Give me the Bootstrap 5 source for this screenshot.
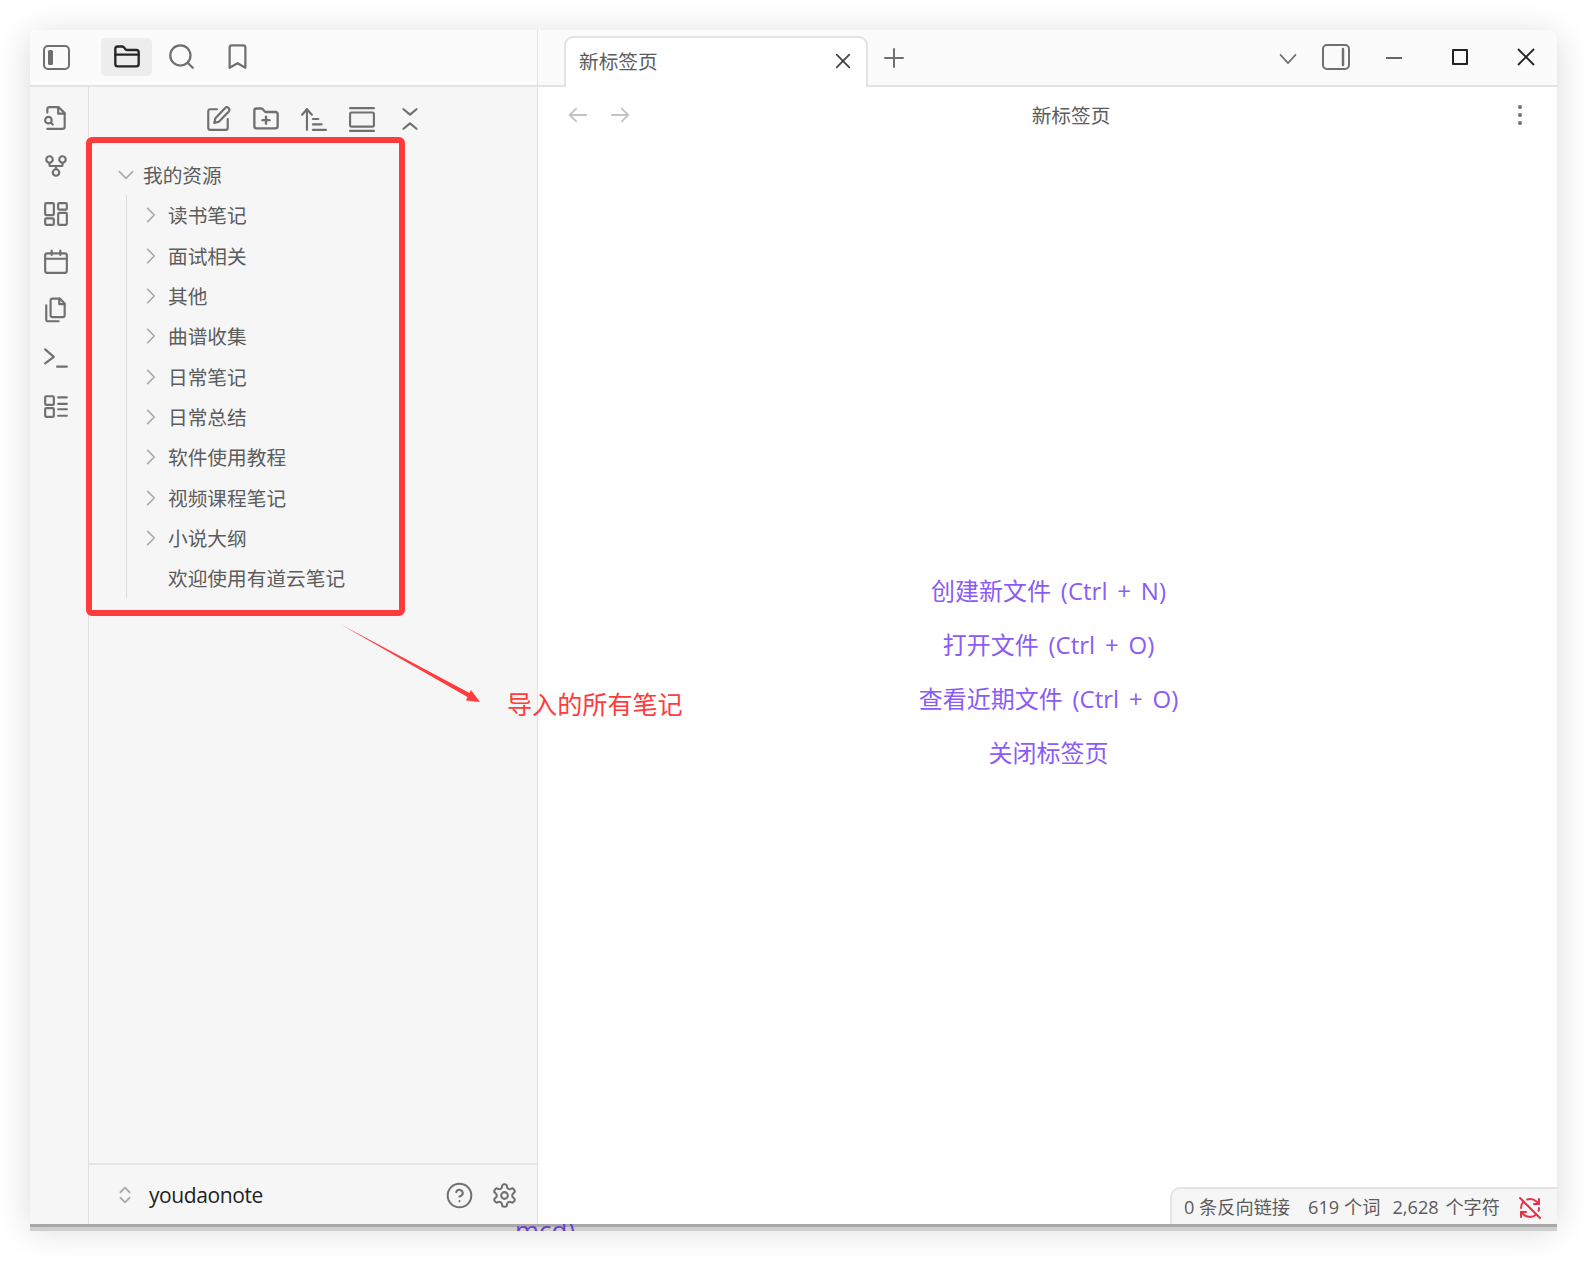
<!DOCTYPE html>
<html lang="zh-CN">
<head>
<meta charset="utf-8">
<title>新标签页</title>
<link rel="stylesheet" href="https://cdn.jsdelivr.net/npm/bootstrap@5.3.0/dist/css/bootstrap.min.css">
<style>
html,body{height:100%;margin:0;background:#fff}
body{font-family:"Noto Sans CJK SC","Open Sans",sans-serif;color:#5c5c5c;overflow:hidden}
.stage{position:relative;width:1587px;height:1261px;padding:30px 0 0 30px;background:#fff}
.appwin{position:relative;width:1527px;height:1195px;background:#fff;box-shadow:0 5px 34px rgba(0,0,0,.15);border-radius:0 8px 8px 6px;overflow:hidden;z-index:1}
.under-strip{position:absolute;left:30px;top:1224px;width:1527px;height:7px;background:linear-gradient(#a8a8a8 0,#a8a8a8 3px,#cfcfcf 3px,#cfcfcf 100%);overflow:hidden;z-index:2}
.under-strip span{position:absolute;left:485px;top:-9px;font:26px/30px "Open Sans",sans-serif;color:#6d42c9}
.left-col{width:508px;background:#f6f6f6;border-right:1px solid #e0e0e0}
.top-left{height:57px;background:#fbfbfb;border-bottom:2px solid #e3e3e3;padding:8px 0 0 0}
.top-slot{width:51px;height:38px;border-radius:5px;margin-right:5px}
.top-slot.on{background:#ededed;margin-right:4px}
.top-slot.nudge{height:36px}
.top-toggle{width:53px;margin-right:18px}
.ribbon{width:59px;border-right:1px solid #e0e0e0;padding-top:7px;padding-right:6px}
.rib-btn{height:48px;width:100%}
.ico{display:block;fill:none;stroke:#707070;stroke-width:2;stroke-linecap:round;stroke-linejoin:round}
.nav-tools{height:50px;padding-left:105.500px;padding-top:14px;gap:0}
.tool-btn{width:47.800px;height:36px}
.vault-tree{padding:0 0 0 25px;margin-top:17px;flex:1 1 auto}
.tree-row{height:40.350px;font-size:19.700px;line-height:40px;color:#5c5c5c;white-space:nowrap}
.tree-root{height:41px}
.tree-root .tw{width:29px}
.tw{width:29px;flex:none}
.tree-kids{border-left:1px solid #dcdcdc;margin-left:12px;width:300px;padding-left:0}
.tree-kids .tree-row{padding-left:16px}
.tree-kids .tw{width:25px}
.tree-kids .leaf{padding-left:41px}
.vault-foot{height:62px;border-top:2px solid #e6e6e6;padding:0 19px 0 25px}
.vault-name{font:21px/1 "Open Sans",sans-serif;color:#222;margin-left:13px;letter-spacing:-.4px}
.help-gap{margin-right:18px}
.right-col{min-width:0}
.tab-bar{height:57px;background:#fbfbfb;border-bottom:2px solid #e3e3e3;position:relative;padding-left:26px}
.tab-on{width:304px;height:51px;margin-top:6px;background:#fff;border:2px solid #e3e3e3;border-bottom:0;border-radius:9px 9px 0 0;padding:0 14px 4px 13px;font-size:19.700px;margin-bottom:-2px;position:relative;color:#5c5c5c}
.tab-plus{margin-left:14px;margin-top:16px}
.win-ctl{margin-left:auto;gap:0;padding-top:5px;padding-right:22px}
.wc{height:40px}
.chev-nudge{margin-top:4px}
.min-nudge{margin-top:2px}
.min-gap{margin-left:36px}
.max-gap{margin-left:50px}
.close-gap{margin-left:49px}
.view-bar{height:55px;padding:0 34px 0 29px;position:relative}
.view-name{font-size:19.700px;color:#5c5c5c;white-space:nowrap;margin-right:6px}
.empty-pane{flex:1 1 auto;padding-bottom:23px;padding-left:2px;gap:0}
.empty-link{font-family:"Open Sans","Noto Sans CJK SC",sans-serif;font-size:24px;line-height:54px;color:#8a5cf5;white-space:nowrap;text-decoration:none;word-spacing:3.600px}
.stat-bar{position:absolute;right:0;bottom:0;height:38px;width:387px;background:#f6f6f6;border:2px solid #e3e3e3;border-right:0;border-bottom:0;border-radius:10px 0 0 0;font-size:18.200px;color:#5c5c5c;padding:2px 0 0 12px;white-space:nowrap;font-family:"Open Sans","Noto Sans CJK SC",sans-serif}
.stat-two{margin-left:18px}
.stat-three{margin-left:12px;word-spacing:2px}
.stat-ico{stroke:#e93147;margin-left:18px}
.mark-box{position:absolute;left:56px;top:107px;width:319px;height:479px;border:6px solid #ff3b3b;border-radius:6px;pointer-events:none}
.mark-arrow{position:absolute;left:310px;top:594px;width:150px;height:84px}
.mark-text{position:absolute;left:477px;top:655px;font-size:25.100px;line-height:36px;color:#ff3b3b;white-space:nowrap}
</style>
</head>
<body>
<div class="stage">
<div class="under-strip"><span>mcd)</span></div>
<div class="appwin d-flex">
  <div class="left-col d-flex flex-column flex-shrink-0">
    <div class="top-left d-flex align-items-start flex-shrink-0">
      <div class="top-slot top-toggle d-flex justify-content-center align-items-center">
        <svg class="ico" width="27" height="25" viewBox="0 0 27 25"><rect x="1" y="1" width="25" height="23" rx="4"/><rect x="5" y="5" width="5" height="15" rx="1.5" fill="#707070" stroke="none"/></svg>
      </div>
      <div class="top-slot on d-flex justify-content-center align-items-center">
        <svg class="ico" style="stroke:#262626" width="28" height="28" viewBox="0 0 24 24"><path d="M20 20a2 2 0 0 0 2-2V8a2 2 0 0 0-2-2h-7.9a2 2 0 0 1-1.69-.9L9.6 3.9A2 2 0 0 0 7.93 3H4a2 2 0 0 0-2 2v13a2 2 0 0 0 2 2Z"/><path d="M2 10h20"/></svg>
      </div>
      <div class="top-slot nudge d-flex justify-content-center align-items-center">
        <svg class="ico" width="27" height="27" viewBox="0 0 24 24"><circle cx="11" cy="11" r="9"/><path d="m22 22-4.5-4.5"/></svg>
      </div>
      <div class="top-slot nudge d-flex justify-content-center align-items-center">
        <svg class="ico" width="27" height="27" viewBox="0 0 24 24"><path d="m19 22-7-4-7 4V4a2 2 0 0 1 2-2h10a2 2 0 0 1 2 2v18z"/></svg>
      </div>
    </div>
    <div class="d-flex flex-grow-1" style="min-height:0">
      <div class="ribbon d-flex flex-column align-items-center flex-shrink-0">
        <div class="rib-btn d-flex justify-content-center align-items-center"><svg class="ico" width="26" height="26" viewBox="0 0 24 24"><path d="M4 22h14a2 2 0 0 0 2-2V7.5L14.5 2H6a2 2 0 0 0-2 2v3"/><path d="M14 2v6h6"/><circle cx="5" cy="14" r="3"/><path d="m9 18-1.8-1.8"/></svg></div>
        <div class="rib-btn d-flex justify-content-center align-items-center"><svg class="ico" width="26" height="26" viewBox="0 0 24 24"><circle cx="12" cy="18" r="3"/><circle cx="6" cy="6" r="3"/><circle cx="18" cy="6" r="3"/><path d="M18 9v2c0 .6-.4 1-1 1H7c-.6 0-1-.4-1-1V9"/><path d="M12 12v3"/></svg></div>
        <div class="rib-btn d-flex justify-content-center align-items-center"><svg class="ico" width="26" height="26" viewBox="0 0 24 24"><rect x="2" y="2" width="8" height="11" rx="1"/><rect x="14" y="2" width="8" height="6" rx="1"/><rect x="14" y="11" width="8" height="11" rx="1"/><rect x="2" y="16" width="8" height="6" rx="1"/></svg></div>
        <div class="rib-btn d-flex justify-content-center align-items-center"><svg class="ico" width="26" height="26" viewBox="0 0 24 24"><rect x="2" y="4" width="20" height="18" rx="2"/><path d="M16 1.500v4"/><path d="M8 1.500v4"/><path d="M2 9h20"/></svg></div>
        <div class="rib-btn d-flex justify-content-center align-items-center"><svg class="ico" width="26" height="26" viewBox="0 0 24 24"><path d="M15.500 1.500H8.600c-.9 0-1.600.7-1.600 1.600v13.800c0 .9.700 1.600 1.600 1.600h9.800c.9 0 1.600-.7 1.600-1.600V6z"/><path d="M3 7.600v13.200c0 .9.700 1.600 1.600 1.600h9.800"/><path d="M15 1.500V6.500h5"/></svg></div>
        <div class="rib-btn d-flex justify-content-center align-items-center"><svg class="ico" width="26" height="26" viewBox="0 0 24 24"><path d="m2 17 8-6-8-7"/><path d="M13 20h9"/></svg></div>
        <div class="rib-btn d-flex justify-content-center align-items-center"><svg class="ico" width="26" height="26" viewBox="0 0 24 24"><rect x="2" y="3" width="8" height="8" rx="1"/><rect x="2" y="14" width="8" height="8" rx="1"/><path d="M14 4h8"/><path d="M14 10h8"/><path d="M14 15h8"/><path d="M14 21h8"/></svg></div>
      </div>
      <div class="d-flex flex-column flex-grow-1" style="min-width:0">
        <div class="nav-tools d-flex align-items-start flex-shrink-0">
          <div class="tool-btn d-flex justify-content-center align-items-center"><svg class="ico" width="26" height="26" viewBox="0 0 24 24"><path d="M11 3H5a2 2 0 0 0-2 2v15a2 2 0 0 0 2 2h14a2 2 0 0 0 2-2v-8"/><path d="M18.400 2a2 2 0 0 1 3.400 3.200L12.800 14.600l-4.200 1 1-4.200z"/></svg></div>
          <div class="tool-btn d-flex justify-content-center align-items-center"><svg class="ico" width="28" height="28" viewBox="0 0 24 24"><path d="M12 10v6"/><path d="M9 13h6"/><path d="M20 20a2 2 0 0 0 2-2V8a2 2 0 0 0-2-2h-7.900a2 2 0 0 1-1.690-.9L9.600 3.900A2 2 0 0 0 7.930 3H4a2 2 0 0 0-2 2v13a2 2 0 0 0 2 2Z"/></svg></div>
          <div class="tool-btn d-flex justify-content-center align-items-center"><svg class="ico" width="26" height="26" viewBox="0 0 24 24"><path d="m1 8 4.500-5L10 8"/><path d="M5.500 3v19"/><path d="M11 12h5"/><path d="M11 17h8"/><path d="M11 22h12"/></svg></div>
          <div class="tool-btn d-flex justify-content-center align-items-center"><svg class="ico" width="26" height="26" viewBox="0 0 24 24"><path d="M1 2h22"/><rect x="1" y="6" width="22" height="13" rx="1.500"/><path d="M1 23h22"/></svg></div>
          <div class="tool-btn d-flex justify-content-center align-items-center"><svg class="ico" width="26" height="26" viewBox="0 0 24 24"><path d="m6 21 6-5 6 5"/><path d="m6 3 6 5 6-5"/></svg></div>
        </div>
        <div class="vault-tree">
          <div class="tree-row tree-root d-flex align-items-center">
            <span class="tw d-flex"><svg class="ico" style="stroke:#ababab;margin-left:2px" width="20" height="20" viewBox="0 0 24 24"><path d="m4 8 8 8 8-8"/></svg></span><span>我的资源</span>
          </div>
          <div class="tree-kids">
            <div class="tree-row d-flex align-items-center"><span class="tw d-flex"><svg class="ico" style="stroke:#ababab" width="16" height="20" viewBox="0 0 16 24"><path d="m4 4 8 8-8 8"/></svg></span><span>读书笔记</span></div>
            <div class="tree-row d-flex align-items-center"><span class="tw d-flex"><svg class="ico" style="stroke:#ababab" width="16" height="20" viewBox="0 0 16 24"><path d="m4 4 8 8-8 8"/></svg></span><span>面试相关</span></div>
            <div class="tree-row d-flex align-items-center"><span class="tw d-flex"><svg class="ico" style="stroke:#ababab" width="16" height="20" viewBox="0 0 16 24"><path d="m4 4 8 8-8 8"/></svg></span><span>其他</span></div>
            <div class="tree-row d-flex align-items-center"><span class="tw d-flex"><svg class="ico" style="stroke:#ababab" width="16" height="20" viewBox="0 0 16 24"><path d="m4 4 8 8-8 8"/></svg></span><span>曲谱收集</span></div>
            <div class="tree-row d-flex align-items-center"><span class="tw d-flex"><svg class="ico" style="stroke:#ababab" width="16" height="20" viewBox="0 0 16 24"><path d="m4 4 8 8-8 8"/></svg></span><span>日常笔记</span></div>
            <div class="tree-row d-flex align-items-center"><span class="tw d-flex"><svg class="ico" style="stroke:#ababab" width="16" height="20" viewBox="0 0 16 24"><path d="m4 4 8 8-8 8"/></svg></span><span>日常总结</span></div>
            <div class="tree-row d-flex align-items-center"><span class="tw d-flex"><svg class="ico" style="stroke:#ababab" width="16" height="20" viewBox="0 0 16 24"><path d="m4 4 8 8-8 8"/></svg></span><span>软件使用教程</span></div>
            <div class="tree-row d-flex align-items-center"><span class="tw d-flex"><svg class="ico" style="stroke:#ababab" width="16" height="20" viewBox="0 0 16 24"><path d="m4 4 8 8-8 8"/></svg></span><span>视频课程笔记</span></div>
            <div class="tree-row d-flex align-items-center"><span class="tw d-flex"><svg class="ico" style="stroke:#ababab" width="16" height="20" viewBox="0 0 16 24"><path d="m4 4 8 8-8 8"/></svg></span><span>小说大纲</span></div>
            <div class="tree-row leaf d-flex align-items-center"><span>欢迎使用有道云笔记</span></div>
          </div>
        </div>
        <div class="vault-foot d-flex align-items-center flex-shrink-0">
          <svg class="ico" style="stroke:#ababab" width="22" height="26" viewBox="0 0 24 24"><path d="m7 15 5 5 5-5"/><path d="m7 9 5-5 5 5"/></svg>
          <span class="vault-name flex-grow-1">youdaonote</span>
          <svg class="ico help-gap" width="27" height="27" viewBox="0 0 24 24" style="stroke-width:1.8"><circle cx="12" cy="12" r="10.500"/><path d="M9.090 9a3 3 0 0 1 5.830 1c0 2-3 3-3 3"/><path d="M12 17h.01"/></svg>
          <svg class="ico" width="27" height="27" viewBox="0 0 24 24" style="stroke-width:1.800"><path d="M12.220 2h-.44a2 2 0 0 0-2 2v.18a2 2 0 0 1-1 1.730l-.43.25a2 2 0 0 1-2 0l-.15-.08a2 2 0 0 0-2.730.73l-.22.38a2 2 0 0 0 .73 2.730l.15.1a2 2 0 0 1 1 1.720v.51a2 2 0 0 1-1 1.740l-.15.09a2 2 0 0 0-.73 2.730l.22.38a2 2 0 0 0 2.730.73l.15-.08a2 2 0 0 1 2 0l.43.25a2 2 0 0 1 1 1.730V20a2 2 0 0 0 2 2h.44a2 2 0 0 0 2-2v-.18a2 2 0 0 1 1-1.730l.43-.25a2 2 0 0 1 2 0l.15.08a2 2 0 0 0 2.730-.73l.22-.39a2 2 0 0 0-.73-2.730l-.15-.08a2 2 0 0 1-1-1.740v-.5a2 2 0 0 1 1-1.740l.15-.09a2 2 0 0 0 .73-2.730l-.22-.38a2 2 0 0 0-2.730-.73l-.15.08a2 2 0 0 1-2 0l-.43-.25a2 2 0 0 1-1-1.730V4a2 2 0 0 0-2-2z"/><circle cx="12" cy="12" r="3"/></svg>
        </div>
      </div>
    </div>
  </div>
  <div class="right-col d-flex flex-column flex-grow-1">
    <div class="tab-bar d-flex align-items-start flex-shrink-0">
      <div class="tab-on d-flex align-items-center justify-content-between">
        <span>新标签页</span>
        <svg class="ico" style="stroke:#444" width="18" height="18" viewBox="0 0 20 20"><path d="m3 3 14 14"/><path d="M17 3 3 17"/></svg>
      </div>
      <div class="tab-plus"><svg class="ico" width="24" height="24" viewBox="0 0 24 24"><path d="M12 3v18"/><path d="M3 12h18"/></svg></div>
      <div class="win-ctl d-flex align-items-center">
        <div class="wc chev-nudge d-flex align-items-center me-4"><svg class="ico" width="20" height="20" viewBox="0 0 24 24"><path d="m3 7 9 10 9-10"/></svg></div>
        <div class="wc d-flex align-items-center"><svg class="ico" width="28" height="26" viewBox="0 0 28 26"><rect x="1" y="1" width="26" height="24" rx="4"/><path d="M21 5v16" stroke-width="2.500"/></svg></div>
        <div class="wc min-gap min-nudge d-flex align-items-center"><svg class="ico" style="stroke:#333;stroke-linecap:butt;stroke-width:1.600" width="16" height="16" viewBox="0 0 16 16"><path d="M0 8h16"/></svg></div>
        <div class="wc max-gap d-flex align-items-center"><svg class="ico" style="stroke:#222;stroke-linecap:butt" width="16" height="16" viewBox="0 0 16 16"><rect x="1" y="1" width="14" height="14"/></svg></div>
        <div class="wc close-gap d-flex align-items-center"><svg class="ico" style="stroke:#222;stroke-linecap:butt;stroke-width:1.800" width="18" height="18" viewBox="0 0 18 18"><path d="m1 1 16 16"/><path d="M17 1 1 17"/></svg></div>
      </div>
    </div>
    <div class="view-bar d-flex align-items-center justify-content-between flex-shrink-0">
      <div class="d-flex align-items-center gap-3">
        <svg class="ico" style="stroke:#c4c4c4" width="22" height="22" viewBox="0 0 24 24"><path d="M21 12H3"/><path d="m10 5-7 7 7 7"/></svg>
        <svg class="ico ms-1" style="stroke:#c4c4c4" width="22" height="22" viewBox="0 0 24 24"><path d="M3 12h18"/><path d="m14 5 7 7-7 7"/></svg>
      </div>
      <span class="view-name">新标签页</span>
      <svg class="ico" style="fill:#707070;stroke:none" width="6" height="22" viewBox="0 0 6 22"><circle cx="3" cy="3" r="2"/><circle cx="3" cy="11" r="2"/><circle cx="3" cy="19" r="2"/></svg>
    </div>
    <div class="empty-pane d-flex flex-column align-items-center justify-content-center">
      <a class="empty-link" href="#">创建新文件 (Ctrl + N)</a>
      <a class="empty-link" href="#">打开文件 (Ctrl + O)</a>
      <a class="empty-link" href="#">查看近期文件 (Ctrl + O)</a>
      <a class="empty-link" href="#">关闭标签页</a>
    </div>
  </div>
  <div class="stat-bar d-flex align-items-center">
    <span>0 条反向链接</span>
    <span class="stat-two">619 个词</span>
    <span class="stat-three">2,628 个字符</span>
    <svg class="ico stat-ico" width="24" height="24" viewBox="0 0 24 24"><path d="M21 8l-2.260-2.260A9.750 9.750 0 0 0 12 3c-1 0-1.970.16-2.870.47"/><path d="M8 16H3v5"/><path d="M3 12c0-2.490 1-4.740 2.640-6.360"/><path d="m3 16 2.260 2.260A9.750 9.750 0 0 0 12 21c2.490 0 4.740-1 6.360-2.640"/><path d="M21 12c0 1-.16 1.970-.47 2.870"/><path d="M21 3v5h-5"/><path d="M22 22 2 2"/></svg>
  </div>
  <div class="mark-box"></div>
  <svg class="mark-arrow" viewBox="0 0 150 84"><polygon points="0,0 129.500,69 131,66 140,78 126,76.500 127.500,73" fill="#ff3b3b"/></svg>
  <div class="mark-text">导入的所有笔记</div>
</div>
</div>
<script src="https://cdn.jsdelivr.net/npm/bootstrap@5.3.0/dist/js/bootstrap.bundle.min.js"></script>
</body>
</html>
